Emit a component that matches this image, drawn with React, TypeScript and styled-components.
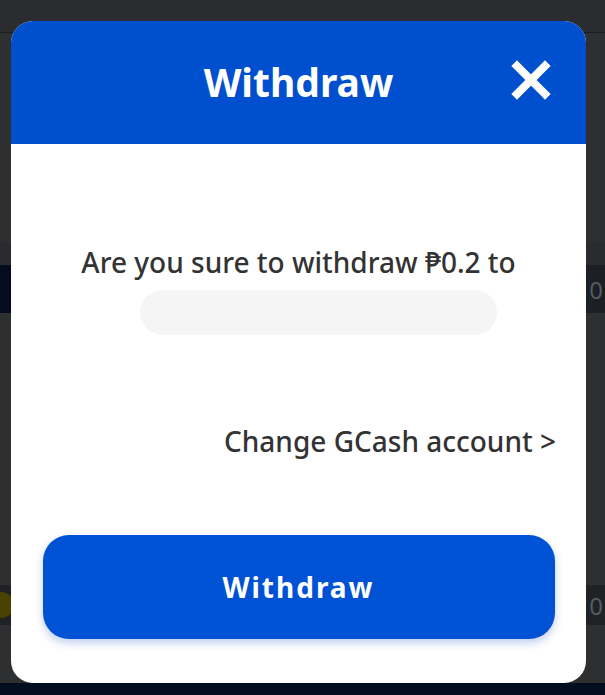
import React from "react";
import styled, { createGlobalStyle } from "styled-components";

const Global = createGlobalStyle`
  html, body { margin: 0; padding: 0; background: #2e2f31; }
  body { font-family: "Noto Sans", "Open Sans", sans-serif; }
  #root { width: 605px; height: 695px; overflow: hidden; }
`;

const Page = styled.div`
  position: relative;
  width: 605px;
  height: 695px;
  background: #2e2f31;
  display: flex;
  flex-direction: column;
`;

const TopBar = styled.div`
  height: 32px;
  border-bottom: 1px solid #1c1d20;
  background: #2b2c2f;
`;

const Spacer = styled.div<{ $h: number }>`
  height: ${(p) => p.$h}px;
  flex-shrink: 0;
`;

const Band = styled.div<{ $h: number; $bg: string }>`
  height: ${(p) => p.$h}px;
  background: ${(p) => p.$bg};
  display: flex;
  align-items: center;
  justify-content: space-between;
  flex-shrink: 0;
`;

const NavyBlock = styled.div`
  width: 40px;
  height: 100%;
  background: #050c1f;
`;

const Zero = styled.span`
  color: #555a62;
  font-size: 24px;
  margin-right: 2px;
`;

const Coin = styled.div`
  width: 26px;
  height: 26px;
  border-radius: 50%;
  background: #4a4200;
  margin-left: -12px;
`;

const Bottom = styled.div`
  flex: 1;
  background: #020d20;
`;

const Modal = styled.div`
  position: absolute;
  left: 11px;
  top: 21px;
  width: 575px;
  height: 662px;
  background: #ffffff;
  border-radius: 22px;
  overflow: hidden;
  display: flex;
  flex-direction: column;
`;

const Header = styled.div`
  height: 123px;
  background: #004fce;
  display: flex;
  align-items: center;
  justify-content: center;
  position: relative;
  flex-shrink: 0;
`;

const Title = styled.h1`
  margin: 0;
  color: #ffffff;
  font-size: 39px;
  font-weight: 700;
  line-height: 1;
  transform: translateY(-1px);
`;

const Close = styled.button`
  position: absolute;
  right: 34px;
  top: 38px;
  width: 42px;
  height: 42px;
  padding: 0;
  border: none;
  background: transparent;
  display: flex;
  align-items: center;
  justify-content: center;
`;

const Body = styled.div`
  flex: 1;
  display: flex;
  flex-direction: column;
  align-items: center;
  padding: 100px 32px 0;
`;

const Message = styled.p`
  margin: 0;
  font-size: 28px;
  font-weight: 500;
  line-height: 36px;
  color: #333333;
  text-align: center;
`;

const AccountPill = styled.div`
  margin-top: 10px;
  margin-left: 40px;
  width: 357px;
  height: 45px;
  border-radius: 23px;
  background: #f5f5f5;
`;

const ChangeLink = styled.a`
  align-self: flex-end;
  margin-top: 88px;
  margin-right: -2px;
  font-size: 28px;
  font-weight: 500;
  line-height: 36px;
  color: #333333;
  text-decoration: none;
`;

const WithdrawButton = styled.button`
  margin-top: 76px;
  width: 512px;
  height: 104px;
  border: none;
  border-radius: 26px;
  background: #0052d4;
  color: #ffffff;
  font-family: "Noto Sans", "Open Sans", sans-serif;
  font-size: 28px;
  font-weight: 700;
  letter-spacing: 2px;
  box-shadow: 0 4px 8px rgba(0, 60, 200, 0.25);
`;

export default function App() {
  return (
    <>
      <Global />
      <Page>
        <TopBar />
        <Spacer $h={210} />
        <Band $h={22} $bg="#2a2b2e" />
        <Band $h={48} $bg="#1c1f24">
          <NavyBlock />
          <Zero>0</Zero>
        </Band>
        <Spacer $h={272} />
        <Band $h={40} $bg="#202226">
          <Coin />
          <Zero>0</Zero>
        </Band>
        <Spacer $h={58} />
        <Bottom />
        <Modal>
          <Header>
            <Title>Withdraw</Title>
            <Close aria-label="Close">
              <svg width="40" height="40" viewBox="0 0 40 40">
                <path
                  d="M6 6 L34 34 M34 6 L6 34"
                  stroke="#ffffff"
                  strokeWidth="8"
                  strokeLinecap="square"
                />
              </svg>
            </Close>
          </Header>
          <Body>
            <Message>Are you sure to withdraw ₱0.2 to</Message>
            <AccountPill />
            <ChangeLink>Change GCash account &gt;</ChangeLink>
            <WithdrawButton>Withdraw</WithdrawButton>
          </Body>
        </Modal>
      </Page>
    </>
  );
}
